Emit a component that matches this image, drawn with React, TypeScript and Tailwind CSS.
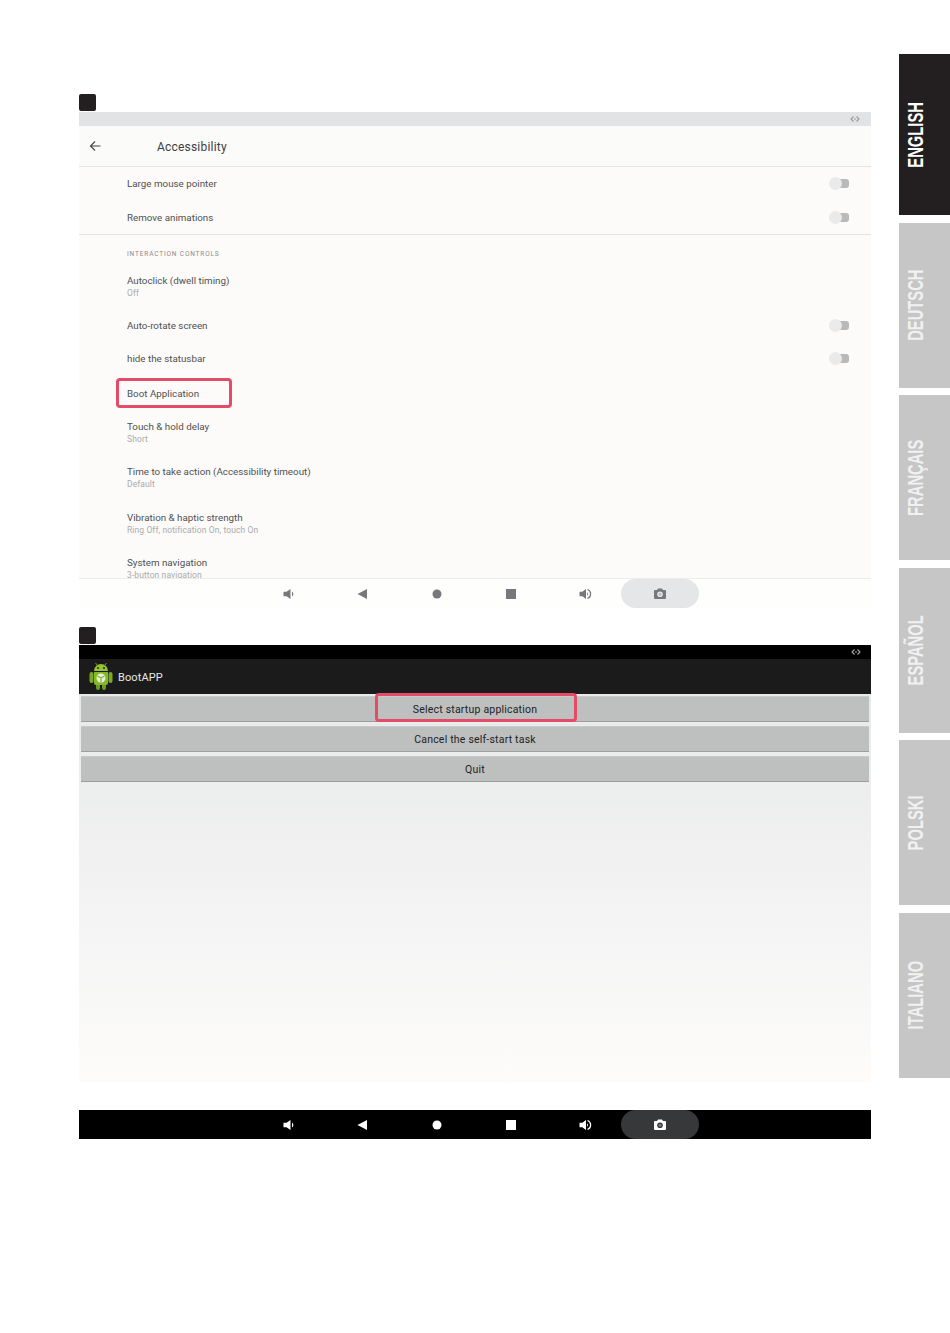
import React from "react";

const roboto = { fontFamily: "Roboto, 'Liberation Sans', sans-serif" };

function Toggle() {
  return (
    <div className="relative h-[13px] w-[20px]">
      <div className="absolute right-0 top-[2px] h-[9px] w-[14px] rounded-r-[3px] bg-[#b9b9b9]" />
      <div className="absolute left-0 top-0 h-[13px] w-[13px] rounded-full bg-[#eaeaea]" />
    </div>
  );
}

function Row({ title, sub, toggle, h }: { title: string; sub?: string; toggle?: boolean; h: string }) {
  return (
    <div className={`flex shrink-0 items-center justify-between pl-[48px] pr-[22px] ${h}`}>
      <div className="flex flex-col">
        <div className="text-[9.800px] leading-[13px] text-[#505050]">{title}</div>
        {sub && <div className="text-[8.500px] leading-[13px] tracking-[0.1px] text-[#ababab]">{sub}</div>}
      </div>
      {toggle && <Toggle />}
    </div>
  );
}

function VolDown({ c }: { c: string }) {
  return (
    <svg className="ml-[2px]" width="12" height="12" viewBox="0 0 12 12">
      <path d="M0.500 3.800h3L7.500 1v10L3.500 8.200h-3z" fill={c} />
      <path d="M9 3.600a2.800 2.800 0 0 1 0 4.800z" fill={c} />
    </svg>
  );
}
function VolUp({ c }: { c: string }) {
  return (
    <svg width="13" height="12" viewBox="0 0 13 12">
      <path d="M0.500 3.800h2.800L7 1v10L3.300 8.200H0.500z" fill={c} />
      <path d="M8 4.200a2.200 2.200 0 0 1 0 3.600z" fill={c} />
      <path d="M8.500 1.500a4.800 4.800 0 0 1 0 9" fill="none" stroke={c} strokeWidth="1.200" />
    </svg>
  );
}
function Back({ c }: { c: string }) {
  return (
    <svg width="11" height="12" viewBox="0 0 11 12">
      <path d="M10 1v10L0.500 6z" fill={c} />
    </svg>
  );
}
function Home({ c }: { c: string }) {
  return (
    <svg width="10" height="10" viewBox="0 0 10 10">
      <circle cx="5" cy="5" r="4.500" fill={c} />
    </svg>
  );
}
function Stop({ c }: { c: string }) {
  return (
    <svg width="10" height="10" viewBox="0 0 10 10">
      <rect width="10" height="10" fill={c} />
    </svg>
  );
}
function Camera({ c, lens }: { c: string; lens: string }) {
  return (
    <svg width="12" height="11" viewBox="0 0 12 11">
      <path d="M4 0.500h4L9 2h2a1 1 0 0 1 1 1v7a1 1 0 0 1-1 1H1a1 1 0 0 1-1-1V3a1 1 0 0 1 1-1h2z" fill={c} />
      <circle cx="6" cy="6.300" r="2.800" fill={lens} />
      <circle cx="6" cy="6.300" r="1.500" fill={c} opacity="0.35" />
    </svg>
  );
}

function Nav({ c, pill, lens }: { c: string; pill: string; lens: string }) {
  const slot = "flex h-full w-[74.300px] items-center justify-center";
  return (
    <div className="flex h-full items-center pl-[172px]">
      <div className={slot}><VolDown c={c} /></div>
      <div className={slot}><Back c={c} /></div>
      <div className={slot}><Home c={c} /></div>
      <div className={slot}><Stop c={c} /></div>
      <div className={slot}><VolUp c={c} /></div>
      <div className={`-ml-px flex h-full w-[78px] items-center justify-center rounded-full ${pill}`}>
        <Camera c={c} lens={lens} />
      </div>
    </div>
  );
}

function Arrows({ c }: { c: string }) {
  return (
    <svg width="10" height="6" viewBox="0 0 10 6" fill="none" stroke={c} strokeWidth="1.100">
      <path d="M3.500 0.500L1 3l2.500 2.500M6.500 0.500L9 3 6.500 5.500M4 3h2" />
    </svg>
  );
}

function Android() {
  return (
    <svg width="24" height="27" viewBox="0 0 24 27">
      <rect x="0.500" y="9" width="4" height="11" rx="2" fill="#7aa926" />
      <rect x="19.500" y="9" width="4" height="11" rx="2" fill="#7aa926" />
      <rect x="7" y="20" width="4" height="7" rx="2" fill="#6b9a20" />
      <rect x="13" y="20" width="4" height="7" rx="2" fill="#6b9a20" />
      <path d="M5 8a7 7 0 0 1 14 0z" fill="#95c233" />
      <path d="M8 2L6.500 0M16 2l1.500-2" stroke="#95c233" strokeWidth="0.800" />
      <circle cx="9" cy="5" r="0.900" fill="#1b1b1b" />
      <circle cx="15" cy="5" r="0.900" fill="#1b1b1b" />
      <path d="M5 9h14v11a2 2 0 0 1-2 2H7a2 2 0 0 1-2-2z" fill="#86b72a" />
      <circle cx="12" cy="15" r="4.500" fill="#e6f0d8" />
      <path d="M12 15v4M12 15l-3.500-2M12 15l3.500-2" stroke="#86b72a" strokeWidth="1.200" />
    </svg>
  );
}

function Marker() {
  return <div className="h-[17px] w-[17px] rounded-[2px] bg-[#231f20]" />;
}

function AppButton({ label }: { label: string }) {
  return (
    <div className="flex h-[26px] items-center justify-center border-t border-b border-t-[#c9caca] border-b-[#9d9e9e] bg-[#bebfbf] pt-[2px] text-[10.500px] tracking-[0.2px] text-[#222222]">
      {label}
    </div>
  );
}

function Tab({ label, active, h }: { label: string; active?: boolean; h: string }) {
  return (
    <div className={`flex items-center pl-[5px] ${h} ${active ? "bg-[#231f20] text-white" : "bg-[#c6c6c6] text-[#f1f1f1]"}`}>
      <span
        className="rotate-180 scale-y-[0.67] text-[22px] font-bold leading-[24px] [writing-mode:vertical-rl]"
        style={{ fontFamily: "'Liberation Sans', sans-serif" }}
      >
        {label}
      </span>
    </div>
  );
}

export default function App() {
  return (
    <div className="flex h-[1333px] w-[950px] overflow-hidden bg-white" style={roboto}>
      <main className="ml-[79px] flex w-[792px] flex-col pt-[94px]">
        <Marker />
        <section className="relative mt-px flex h-[496px] flex-col bg-[#fcfbfa]">
          <div className="flex h-[14px] shrink-0 items-center justify-end bg-[#e2e3e4] pr-[11px]">
            <Arrows c="#9a9a9a" />
          </div>
          <header className="flex h-[41px] shrink-0 items-center border-b border-[#e4e4e4] bg-[#fbfbfa]">
            <svg className="ml-[10px]" width="13" height="12" viewBox="0 0 13 12" fill="none" stroke="#444444" strokeWidth="1.100">
              <path d="M11.500 6H1.500M6 1.500L1.500 6 6 10.500" />
            </svg>
            <h1 className="ml-[55px] pt-[2px] text-[12px] font-normal tracking-[0.2px] text-[#404040]">Accessibility</h1>
          </header>
          <div className="flex min-h-0 flex-1 flex-col overflow-hidden">
            <Row title="Large mouse pointer" toggle h="h-[33px]" />
            <Row title="Remove animations" toggle h="h-[34px]" />
            <div className="h-px shrink-0 bg-[#e4e4e4]" />
            <div className="flex h-[29px] shrink-0 items-end pl-[48px] pb-[5px] text-[6.500px] leading-[9px] tracking-[0.85px] text-[#8a8a8a]">
              INTERACTION CONTROLS
            </div>
            <Row title="Autoclick (dwell timing)" sub="Off" h="h-[45px]" />
            <Row title="Auto-rotate screen" toggle h="h-[33px]" />
            <Row title="hide the statusbar" toggle h="h-[33.500px]" />
            <Row title="Boot Application" h="h-[35px]" />
            <Row title="Touch & hold delay" sub="Short" h="h-[45px]" />
            <Row title="Time to take action (Accessibility timeout)" sub="Default" h="h-[45.500px]" />
            <Row title="Vibration & haptic strength" sub="Ring Off, notification On, touch On" h="h-[45.500px]" />
            <Row title="System navigation" sub="3-button navigation" h="h-[45px]" />
          </div>
          <div className="h-[30px] shrink-0 border-t border-[#ececec] bg-[#fefefd]">
            <Nav c="#77787b" pill="bg-[#e5e6e8]" lens="#e5e6e8" />
          </div>
          <div className="absolute left-[37px] top-[266px] h-[30px] w-[116px] rounded-[4px] border-[3px] border-[#e34b67]" />
        </section>

        <div className="mt-[19px]">
          <Marker />
        </div>
        <section className="relative mt-px flex h-[494px] flex-col">
          <div className="flex h-[14px] shrink-0 items-center justify-end bg-black pr-[10px]">
            <Arrows c="#a8a8a8" />
          </div>
          <header className="flex h-[35px] shrink-0 items-center bg-[#1b1b1b] pl-[10px]">
            <Android />
            <span className="ml-[5px] pt-[4px] text-[11px] tracking-[0.1px] text-[#e8e8e8]">BootAPP</span>
          </header>
          <div className="flex h-[388px] shrink-0 flex-col gap-[4px] bg-gradient-to-b from-[#e8e9ea] to-[#fdfcfb] px-[2px] pt-[2px]">
            <AppButton label="Select startup application" />
            <AppButton label="Cancel the self-start task" />
            <AppButton label="Quit" />
          </div>
          <div className="h-[28px] shrink-0 bg-white" />
          <div className="h-[29px] shrink-0 bg-black">
            <Nav c="#ffffff" pill="bg-[#37383a]" lens="#37383a" />
          </div>
          <div className="absolute left-[296px] top-[48px] h-[29px] w-[202px] rounded-[4px] border-[3px] border-[#e34b67]" />
        </section>
      </main>

      <aside className="ml-[28px] flex w-[51px] flex-col gap-[7.600px] pt-[54px]">
        <Tab label="ENGLISH" active h="h-[161px]" />
        <Tab label="DEUTSCH" h="h-[165px]" />
        <Tab label="FRANÇAIS" h="h-[165px]" />
        <Tab label="ESPAÑOL" h="h-[165px]" />
        <Tab label="POLSKI" h="h-[165px]" />
        <Tab label="ITALIANO" h="h-[165px]" />
      </aside>
    </div>
  );
}
